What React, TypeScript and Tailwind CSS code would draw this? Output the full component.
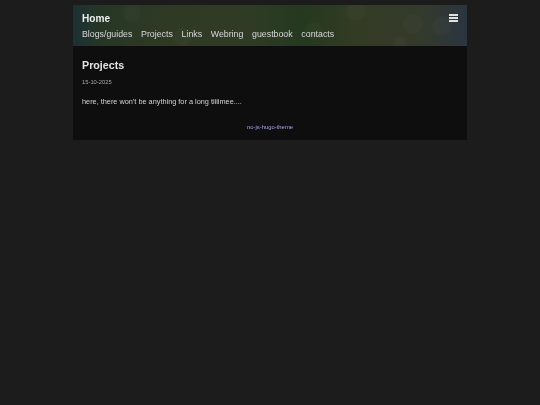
export default function App() {
  const links = ["Blogs/guides", "Projects", "Links", "Webring", "guestbook", "contacts"];
  return (
    <div className="min-h-[405px] bg-[#1c1c1c] pt-[5px] font-['Liberation_Sans',sans-serif]">
      <div className="mx-auto w-[394px] bg-[#0e0e0e]">
        <header className="relative h-[41px] overflow-hidden bg-[linear-gradient(90deg,#1d3033_0%,#273725_8%,#2f3a24_25%,#2f3c25_45%,#24391f_58%,#333b24_72%,#343a2b_88%,#2a3540_100%)] px-[9px]">
          <svg className="absolute inset-0 blur-[1px]" width="394" height="41" viewBox="0 0 394 41">
            <g fill="#ffffff" fillOpacity="0.025">
              <circle cx="59" cy="8" r="9" />
              <circle cx="110" cy="32" r="9" />
              <circle cx="241" cy="26" r="9" />
              <circle cx="283" cy="6" r="10" />
              <circle cx="340" cy="19" r="10" />
              <circle cx="369" cy="21" r="10" />
              <circle cx="327" cy="37" r="6" />
            </g>
          </svg>
          <div className="relative pt-[7px] text-[10.1px] font-bold leading-[14px] text-[#ececec] blur-[0.2px]">Home</div>
          <nav className="relative mt-[2px] flex gap-[8.7px] text-[8.8px] leading-[12px] text-[#d8d8d8] blur-[0.2px]">
            {links.map((l) => (
              <span key={l}>{l}</span>
            ))}
          </nav>
          <div className="absolute right-[9px] top-[9px] flex w-[9px] flex-col gap-[1.5px] blur-[0.2px]">
            <span className="h-[1.5px] bg-[#e0e0e0]" />
            <span className="h-[1.5px] bg-[#e0e0e0]" />
            <span className="h-[1.5px] bg-[#e0e0e0]" />
          </div>
        </header>
        <main className="h-[94px] px-[9px] pt-[12px] blur-[0.2px]">
          <h1 className="text-[10.7px] font-bold leading-[14px] text-[#e4e4e4]">Projects</h1>
          <p className="mt-[6px] text-[5.8px] leading-[8px] text-[#a8a8a8]">15-10-2025</p>
          <p className="mt-[11px] text-[7.33px] leading-[10px] text-[#d4d4d4]">here, there won't be anything for a long tiiiimee....</p>
          <p className="mt-[16px] text-center text-[5.9px] leading-[8px] text-[#a4a4e4]">no-js-hugo-theme</p>
        </main>
      </div>
    </div>
  );
}
